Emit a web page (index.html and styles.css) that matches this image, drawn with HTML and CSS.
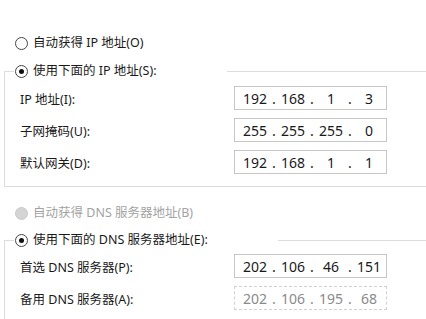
FILE: index.html
```html
<!DOCTYPE html>
<html lang="zh-CN">
<head>
    <meta charset="UTF-8">
    <title>Internet 协议版本 4 (TCP/IPv4) 属性</title>
    <link rel="stylesheet" href="styles.css">
</head>
<body>
    <div class="panel">
        <label class="radio">
            <span class="dot"></span>自动获得 IP 地址(O)
        </label>
        <fieldset class="group">
            <legend class="radio checked"><span class="dot"></span>使用下面的 IP 地址(S):</legend>
            <div class="row">
                <span class="name">IP 地址(I):</span>
                <div class="ip"><span>192</span><i>.</i><span>168</span><i>.</i><span>1</span><i>.</i><span>3</span></div>
            </div>
            <div class="row">
                <span class="name">子网掩码(U):</span>
                <div class="ip"><span>255</span><i>.</i><span>255</span><i>.</i><span>255</span><i>.</i><span>0</span></div>
            </div>
            <div class="row">
                <span class="name">默认网关(D):</span>
                <div class="ip"><span>192</span><i>.</i><span>168</span><i>.</i><span>1</span><i>.</i><span>1</span></div>
            </div>
        </fieldset>

        <label class="radio disabled">
            <span class="dot"></span>自动获得 DNS 服务器地址(B)
        </label>
        <fieldset class="group open">
            <legend class="radio checked"><span class="dot"></span>使用下面的 DNS 服务器地址(E):</legend>
            <div class="row">
                <span class="name">首选 DNS 服务器(P):</span>
                <div class="ip"><span>202</span><i>.</i><span>106</span><i>.</i><span>46</span><i>.</i><span>151</span></div>
            </div>
            <div class="row">
                <span class="name">备用 DNS 服务器(A):</span>
                <div class="ip faded"><span>202</span><i>.</i><span>106</span><i>.</i><span>195</span><i>.</i><span>68</span></div>
            </div>
        </fieldset>
    </div>
</body>
</html>
```

FILE: styles.css
```css
body {
    margin: 0;
    background-color: #fff;
    font-family: "Noto Sans", "Noto Sans CJK SC", sans-serif;
    font-size: 12.5px;
    color: #1a1a1a;
}
.panel {
    padding-top: 34px;
}
.radio {
    display: flex;
    align-items: center;
    height: 18px;
    line-height: 18px;
    padding-left: 15px;
    margin-bottom: 10px;
}
.dot {
    width: 11px;
    height: 11px;
    border: 1px solid #444;
    border-radius: 50%;
    background-color: #fff;
    margin-right: 5px;
    display: flex;
    align-items: center;
    justify-content: center;
    flex: none;
}
.radio.checked .dot::after {
    content: "";
    width: 5px;
    height: 5px;
    border-radius: 50%;
    background-color: #111;
}
.radio.disabled {
    color: #a3a3a3;
    margin-bottom: 9px;
}
.radio.disabled .dot {
    background-color: #d4d4d4;
    border-color: #c8c8c8;
}
.group {
    margin: 0 0 17px 4px;
    padding: 6px 0 12px 15px;
    border: none;
    border-top: 1px solid #dddddd;
    border-left: 1px solid #dddddd;
    border-bottom: 1px solid #dddddd;
    min-width: 0;
}
.group.open {
    border-bottom: none;
    padding-top: 5px;
    margin-bottom: 0;
}
.group legend {
    margin: 0 0 0 -6px;
    padding: 0 70px 0 1px;
}
.row {
    display: grid;
    grid-template-columns: 214px 153px;
    align-items: center;
    height: 24px;
    margin-bottom: 8px;
}
.row:last-child {
    margin-bottom: 0;
}
.ip {
    box-sizing: border-box;
    height: 24px;
    border: 1px solid #c6c6c6;
    display: flex;
    align-items: center;
    padding-left: 5px;
    font-family: "Noto Sans", sans-serif;
    font-size: 14px;
    color: #1a1a1a;
}
.ip span {
    width: 30px;
    text-align: center;
}
.ip i {
    font-style: normal;
    width: 8px;
    text-align: center;
}
.ip.faded {
    color: #8a8a8a;
    border-style: dashed;
    border-color: #d0d0d0;
}
```
